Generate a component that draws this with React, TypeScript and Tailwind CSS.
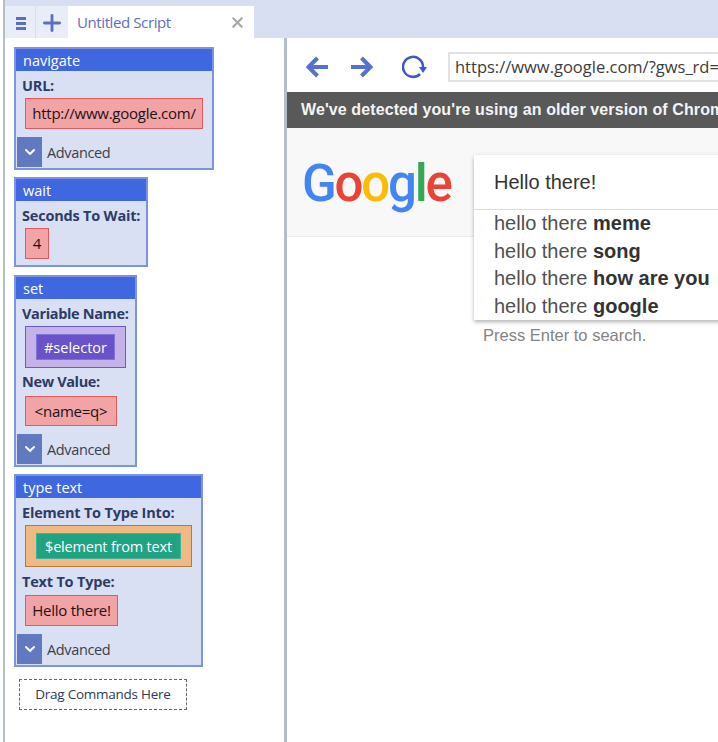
import { ChevronDown, Plus, X } from 'lucide-react';
import type { ReactNode } from 'react';

const uiFont = 'font-["Open_Sans",sans-serif]';
const arial = 'font-["Liberation_Sans",Arial,sans-serif]';

function Advanced() {
  return (
    <div className="flex items-center h-[30px] mt-[8px] ml-[1px]">
      <div className="w-[25px] h-[30px] bg-[#6079bf] flex items-center justify-center">
        <ChevronDown size={16} strokeWidth={3} className="text-white" />
      </div>
      <span className="ml-[5px] pt-[1px] text-[14.5px] text-[#3a3f4a] tracking-[-0.35px]">Advanced</span>
    </div>
  );
}

function Label({ children }: { children: ReactNode }) {
  return (
    <div className="ml-[6px] h-[21px] leading-[19px] text-[14.5px] font-bold text-[#2d3b68] tracking-[-0.2px] whitespace-nowrap">
      {children}
    </div>
  );
}

function Field({ children, className }: { children: ReactNode; className: string }) {
  return (
    <div className={`ml-[9px] leading-[29px] border border-[#e0595c] bg-[#f2a3a6] text-[15px] text-[#1d1214] text-center tracking-[-0.25px] whitespace-nowrap ${className}`}>
      {children}
    </div>
  );
}

function Block({ title, width, children }: { title: string; width: string; children: ReactNode }) {
  return (
    <div className={`border-2 border-[#7b93e2] bg-[#d9e0f3] pb-[1px] ${width}`}>
      <div className="h-[22px] leading-[24px] bg-[#3f67e0] pl-[7px] text-[14.5px] text-white">{title}</div>
      <div className="pt-[5px]">{children}</div>
    </div>
  );
}

function Sidebar() {
  return (
    <aside className={`w-[279px] shrink-0 pl-[9px] pt-[9px] flex flex-col bg-white ${uiFont}`}>
      <Block title="navigate" width="w-[200px]">
        <Label>URL:</Label>
        <Field className="h-[31px] mt-[1px] w-[178px]">http://www.google.com/</Field>
        <Advanced />
      </Block>

      <div className="mt-[7px]">
        <Block title="wait" width="w-[134px]">
          <Label>Seconds To Wait:</Label>
          <Field className="h-[31px] mt-[1px] w-[24px]">4</Field>
          <div className="h-[5px]" />
        </Block>
      </div>

      <div className="mt-[8px]">
        <Block title="set" width="w-[123px]">
          <Label><span className="tracking-[-0.35px]">Variable Name:</span></Label>
          <div className="ml-[9px] mt-[1px] w-[101px] h-[42px] border border-[#6a5acd] bg-[#c4b2e8] flex items-center justify-center">
            <div className="w-[79px] h-[26px] leading-[25px] border border-[#8272d9] bg-[#6a52c8] text-center text-[14.5px] text-white">
              #selector
            </div>
          </div>
          <div className="mt-[4px]"><Label><span className="tracking-[-0.35px]">New Value:</span></Label></div>
          <Field className="h-[30px] mt-[3px] w-[92px]">&lt;name=q&gt;</Field>
          <Advanced />
        </Block>
      </div>

      <div className="mt-[7px]">
        <Block title="type text" width="w-[189px]">
          <Label>Element To Type Into:</Label>
          <div className="ml-[9px] mt-[1px] w-[167px] h-[42px] border border-[#b5793a] bg-[#eeb983] flex items-center justify-center">
            <div className="w-[145px] h-[26px] leading-[26px] border border-[#3cb39a] bg-[#1fa383] text-center text-[14.5px] text-white tracking-[-0.2px] whitespace-nowrap">
              $element from text
            </div>
          </div>
          <div className="mt-[5px]"><Label>Text To Type:</Label></div>
          <Field className="h-[31px] mt-[2px] w-[93px]">Hello there!</Field>
          <Advanced />
        </Block>
      </div>

      <div className="mt-[12px] ml-[5px] w-[168px] h-[31px] border border-dashed border-[#666] flex items-center justify-center text-[13.5px] text-[#2f3a55] tracking-[-0.25px]">
        Drag Commands Here
      </div>
    </aside>
  );
}

function Suggestion({ bold }: { bold: string }) {
  return (
    <div className="h-[27.6px] leading-[27.6px] text-[#505050] whitespace-nowrap">
      hello there <b className="text-[#333]">{bold}</b>
    </div>
  );
}

function BackIcon({ flip }: { flip?: boolean }) {
  return (
    <svg width="23" height="22" viewBox="0 0 23 22" fill="none" stroke="#5272ce" strokeWidth="4" className={flip ? 'shrink-0 -scale-x-100' : 'shrink-0'}>
      <path d="M3 11H23" />
      <path d="M12.5 2 3.5 11l9 9" />
    </svg>
  );
}

function ReloadIcon() {
  return (
    <svg width="25" height="24" viewBox="0 0 25 24" fill="none" className="shrink-0">
      <path d="M18 19A10 10 0 1 1 21 12" stroke="#3c59c4" strokeWidth="2.5" />
      <path d="M17 12h8l-4 6z" fill="#3c59c4" />
    </svg>
  );
}

function BrowserPane() {
  return (
    <main className={`flex-1 min-w-0 flex flex-col overflow-hidden ${arial}`}>
      <div className="h-[54px] shrink-0 flex items-center pl-[18px] pt-[4px]">
        <BackIcon />
        <div className="ml-[23px]"><BackIcon flip /></div>
        <div className="ml-[28px]"><ReloadIcon /></div>
        <div className={`ml-[21px] w-[300px] h-[30px] border-2 border-[#e2e2e2] pl-[5px] leading-[26px] text-[16.5px] text-[#3c3c3c] whitespace-nowrap overflow-hidden shrink-0 ${uiFont}`}>
          https://www.google.com/?gws_rd=ssl
        </div>
      </div>

      <div className="h-[36px] shrink-0 bg-[#595959] pl-[14px] leading-[36px] text-[16px] tracking-[0.1px] font-bold text-[#f4f4f4] whitespace-nowrap">
        We've detected you're using an older version of Chrome. Reinstall
      </div>

      <div className="relative h-[109px] shrink-0 bg-[#f8f8f8] border-b border-[#ebebeb] pl-[15px] pt-[24px]">
        <div className='font-["Roboto",sans-serif] font-medium text-[51px] leading-[64px] tracking-[-2.2px]'>
          <span className="text-[#4285f4]">G</span>
          <span className="text-[#ea4335]">o</span>
          <span className="text-[#fbbc05]">o</span>
          <span className="text-[#4285f4]">g</span>
          <span className="text-[#34a853]">l</span>
          <span className="text-[#ea4335]">e</span>
        </div>

        <div className="absolute left-[187px] top-[27px] w-[260px] h-[165px] bg-white shadow-[0_2px_4px_rgba(0,0,0,0.3)] text-[20px]">
          <div className="h-[55px] border-b border-[#dcdcdc] pl-[20px] leading-[55px] text-[#333]">Hello there!</div>
          <div className="pl-[20px]">
            <Suggestion bold="meme" />
            <Suggestion bold="song" />
            <Suggestion bold="how are you" />
            <Suggestion bold="google" />
          </div>
        </div>

        <div className="absolute left-[196px] top-[197px] leading-[20px] text-[16.5px] text-[#838383] whitespace-nowrap">
          Press Enter to search.
        </div>
      </div>
    </main>
  );
}

export default function App() {
  return (
    <div className="w-[718px] h-[742px] overflow-hidden bg-white flex">
      <div className="w-[3px] shrink-0 bg-white" />
      <div className="w-[2px] shrink-0 bg-[#b4bfcc]" />
      <div className="flex-1 min-w-0 flex flex-col">
        <div className="h-[38px] shrink-0 bg-[#d8dff3] flex items-end">
          <div className="w-[30px] h-[32px] pl-[1px] pt-[2px] bg-[#e9edf8] flex flex-col items-center justify-center gap-[2px]">
            <div className="w-[10px] h-[3px] bg-[#5a70bf]" />
            <div className="w-[10px] h-[3px] bg-[#5a70bf]" />
            <div className="w-[10px] h-[3px] bg-[#5a70bf]" />
          </div>
          <div className="ml-[1px] w-[32px] h-[32px] pt-[1px] bg-[#e9edf8] flex items-center justify-center">
            <Plus size={26} strokeWidth={2.6} className="text-[#5a70bf]" />
          </div>
          <div className={`w-[186px] h-[32px] bg-white flex items-center justify-between pl-[9px] pr-[8px] text-[15px] text-[#5a70bf] ${uiFont}`}>
            <span className="tracking-[-0.4px] leading-[34px]">Untitled Script</span>
            <X size={17} strokeWidth={3} className="text-[#a8a8a8]" />
          </div>
        </div>

        <div className="flex-1 min-h-0 flex">
          <Sidebar />
          <div className="w-[3px] shrink-0 bg-[#b5bdc9]" />
          <BrowserPane />
        </div>
      </div>
    </div>
  );
}
